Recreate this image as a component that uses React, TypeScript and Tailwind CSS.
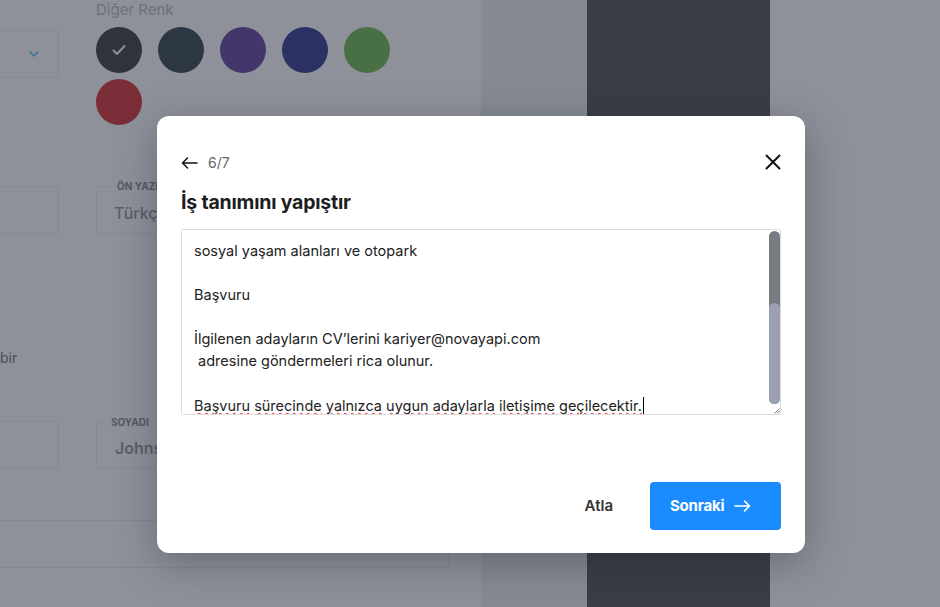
import { ChevronDown } from 'lucide-react'

const swatches = ['bg-[#2f333b]', 'bg-[#2d3744]', 'bg-[#43366a]', 'bg-[#2c3163]', 'bg-[#487044]', 'bg-[#7b2e38]']

const hiddenLines = [
  'Neler Sunuyoruz',
  '',
  'Rekabetçi maaş ve performans primi',
  'Özel sağlık sigortası, yemek kartı, servis,',
  '',
  'sosyal yaşam alanları ve otopark',
  '',
  'Başvuru',
  '',
  'İlgilenen adayların CV’lerini kariyer@novayapi.com',
  ' adresine göndermeleri rica olunur.',
  '',
]

const lastLine = 'Başvuru sürecinde yalnızca uygun adaylarla iletişime geçilecektir.'

function BackgroundPage() {
  return (
    <div className="flex h-[607px] w-full overflow-hidden">
      {/* Form column */}
      <div className="w-[481px] shrink-0 bg-[#8e9199] text-[#5b5f68]">
        <div className="flex gap-[37px]">
          <div className="w-[59px] pt-[30px]">
            <div className="flex h-[48px] items-center justify-end rounded-r-[3px] border border-l-0 border-[#868991] pr-[16px]">
              <ChevronDown size={16} strokeWidth={2.2} className="text-[#2c7894]" />
            </div>
          </div>
          <div className="w-[353px]">
            <p className="h-[19px] text-[15px] leading-[19px] text-[#6c7079]">Diğer Renk</p>
            <div className="mt-[8px] flex w-[300px] flex-wrap gap-x-[16px] gap-y-[6px]">
              <div className={`flex h-[46px] w-[46px] items-center justify-center rounded-full ${swatches[0]}`}>
                <svg width="18" height="18" viewBox="0 0 18 18" fill="none">
                  <path d="M3.5 9.5l3.5 3.5 7.5-8" stroke="#8d9098" strokeWidth="2" strokeLinecap="round" strokeLinejoin="round" />
                </svg>
              </div>
              {swatches.slice(1).map((c) => (
                <div key={c} className={`h-[46px] w-[46px] rounded-full ${c}`} />
              ))}
            </div>
          </div>
        </div>

        <div className="mt-[61px] flex gap-[37px]">
          <div className="h-[48px] w-[59px] rounded-r-[3px] border border-l-0 border-[#868991]" />
          <div className="relative flex h-[48px] w-[353px] items-center rounded-[3px] border border-[#868991] pl-[17px]">
            <span className="absolute -top-[7px] left-[13px] bg-[#8e9199] px-[7px] text-[10px] font-bold leading-[12px] text-[#555861]">ÖN YAZI</span>
            <span className="pt-[6px] text-[16px] font-medium">Türkçe</span>
          </div>
        </div>

        <p className="mt-[114px] h-[20px] text-[14px] leading-[20px] text-[#4a4d55]">bir</p>

        <div className="mt-[53px] flex gap-[37px]">
          <div className="h-[48px] w-[59px] rounded-r-[3px] border border-l-0 border-[#868991]" />
          <div className="relative flex h-[48px] w-[353px] items-center rounded-[3px] border border-[#868991] pl-[18px]">
            <span className="absolute -top-[6px] left-[8px] bg-[#8e9199] px-[6px] text-[10px] font-bold leading-[12px] text-[#555861]">SOYADI</span>
            <span className="pt-[6px] text-[16px] font-semibold">Johnson</span>
          </div>
        </div>

        <div className="mt-[51px] h-[48px] w-[449px] rounded-r-[3px] border border-l-0 border-[#868991]" />
      </div>

      <div className="w-[106px] shrink-0 bg-[#878a93]" />
      <div className="w-[183px] shrink-0 bg-[#3a3d46]" />
      <div className="flex-1 bg-[#8e9199]" />
    </div>
  )
}

function Modal() {
  return (
    <div className="w-[648px] rounded-[12px] bg-white px-[24px] pb-[23px] pt-[38px] shadow-[0_10px_40px_rgba(30,34,44,0.35)]">
      <div className="flex items-center justify-between">
        <div className="flex items-center gap-[10px]">
          <svg width="17" height="12" viewBox="0 0 17 12" fill="none">
            <path d="M16 6H1.5M6.5 1L1.5 6l5 5" stroke="#111" strokeWidth="1.5" strokeLinecap="round" strokeLinejoin="round" />
          </svg>
          <span className="text-[14px] leading-[18px] text-[#666]">6/7</span>
        </div>
        <svg width="16" height="16" viewBox="0 0 16 16" fill="none" className="-mt-[2px]">
          <path d="M1.5 1.5l13 13M14.5 1.5l-13 13" stroke="#111" strokeWidth="2" strokeLinecap="round" />
        </svg>
      </div>

      <h2 className="mt-[17px] text-[19.5px] font-bold leading-[26px] tracking-[-0.2px] text-[#1d1d1f]">İş tanımını yapıştır</h2>

      <div className="mt-[14px] flex h-[186px] rounded-[2px] border border-[#dcdcdc]">
        <div className="flex flex-1 flex-col justify-end overflow-hidden whitespace-pre-wrap pl-[12px] text-[14.5px] leading-[22px] text-[#222]">
          <div className="translate-y-[2px]">
            {hiddenLines.map((l, i) => (
              <div key={i} className="h-[22px]">{l}</div>
            ))}
            <div className="h-[22px]">
              {lastLine.split(' ').map((w, i, arr) => (
                <span key={i}>
                  <span className="underline decoration-[#e0302c] decoration-wavy decoration-[1.2px] underline-offset-[1px]">{w}</span>
                  {i < arr.length - 1 ? ' ' : ''}
                </span>
              ))}
              <span className="ml-[1px] inline-block h-[17px] w-[1px] translate-y-[3px] bg-black align-baseline" />
            </div>
          </div>
        </div>
        <div className="flex w-[11px] flex-col">
          <div className="mt-[1px] flex flex-1 flex-col rounded-full bg-[#767b84]">
            <div className="h-[72px]" />
            <div className="flex-1 rounded-full bg-[#9aa0b3]" />
          </div>
          <div className="flex h-[10px] items-end justify-end">
            <svg width="6" height="6" viewBox="0 0 6 6">
              <path d="M5.5 0.5L0.5 5.5M5.5 3L3 5.5" stroke="#777" strokeWidth="1" />
            </svg>
          </div>
        </div>
      </div>

      <div className="mt-[67px] flex items-center justify-end gap-[37px]">
        <button className="text-[15px] font-semibold text-[#333]">Atla</button>
        <button className="flex h-[48px] w-[131px] items-center gap-[10px] rounded-[4px] bg-[#1a8cff] pl-[20px] text-[15px] font-bold tracking-[-0.2px] text-white">
          Sonraki
          <svg width="17" height="12" viewBox="0 0 17 12" fill="none">
            <path d="M1 6h14.5M10.5 1l5 5-5 5" stroke="#fff" strokeWidth="1.6" strokeLinecap="round" strokeLinejoin="round" />
          </svg>
        </button>
      </div>
    </div>
  )
}

export default function App() {
  return (
    <div className="relative h-[607px] w-[940px] overflow-hidden font-['Inter',sans-serif]">
      <BackgroundPage />
      <div className="absolute inset-0 pl-[157px] pt-[116px]">
        <Modal />
      </div>
    </div>
  )
}
